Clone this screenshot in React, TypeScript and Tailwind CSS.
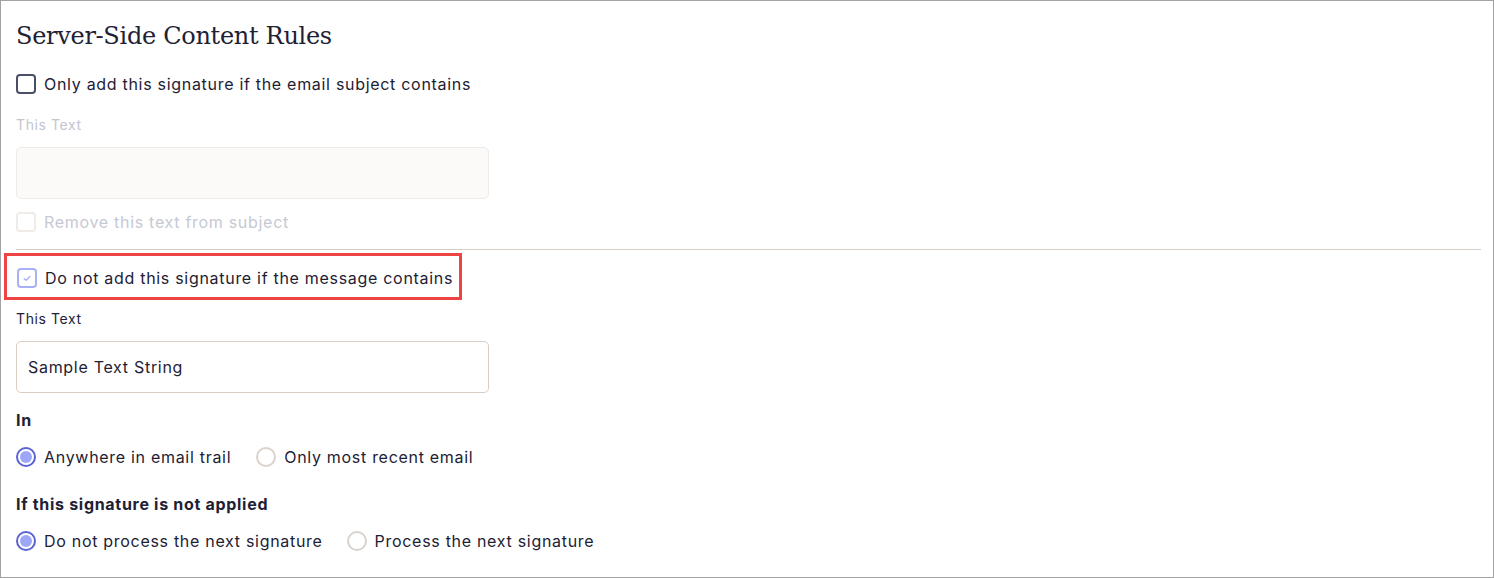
import React from 'react';

const sans = "font-['Inter','Noto_Sans',sans-serif]";
const body = 'text-[16px] leading-5 tracking-[0.7px]';

const Checkbox = ({ state }: { state: 'off' | 'disabled' | 'checked' }) => {
  if (state === 'checked') {
    return (
      <span className="flex h-5 w-5 shrink-0 items-center justify-center rounded-[4px] border-2 border-[#a9b0f7] bg-white">
        <svg viewBox="0 0 12 12" className="h-[10px] w-[10px]">
          <path d="M2.5 6.8 L5 8.8 L9.5 4" fill="none" stroke="#9aa2f3" strokeWidth="1.4" strokeLinecap="round" strokeLinejoin="round" />
        </svg>
      </span>
    );
  }
  return (
    <span
      className={
        'block h-5 w-5 shrink-0 rounded-[4px] border-2 bg-white ' +
        (state === 'off' ? 'border-[#4a4f67]' : 'border-[#f0ebe7]')
      }
    />
  );
};

const Radio = ({ checked }: { checked?: boolean }) =>
  checked ? (
    <span className="flex h-5 w-5 shrink-0 items-center justify-center rounded-full border-2 border-[#5a62d4] bg-white">
      <span className="h-3 w-3 rounded-full bg-[#9ea6f6]" />
    </span>
  ) : (
    <span className="block h-5 w-5 shrink-0 rounded-full border-2 border-[#dad2cc] bg-white" />
  );

export default function App() {
  return (
    <div className={`h-[578px] w-[1494px] border border-[#a3a3a3] bg-white pl-[15px] pr-[12px] text-[#1e2134] ${sans}`}>
      <h1 className="mt-[19px] font-['DejaVu_Serif',serif] text-[24px] leading-8 tracking-[-0.3px] text-[#1e2134]">
        Server-Side Content Rules
      </h1>

      <label className="mt-[22px] flex items-center gap-2">
        <Checkbox state="off" />
        <span className={body}>Only add this signature if the email subject contains</span>
      </label>

      <div className="mt-[21px] text-[14px] leading-5 tracking-[0.6px] text-[#c3c5cf]">This Text</div>
      <div className="mt-3 h-[52px] w-[473px] rounded-[5px] border border-[#efece8] bg-[#fbfaf8]" />

      <label className="mt-[13px] flex items-center gap-2">
        <Checkbox state="disabled" />
        <span className={`${body} text-[#c6c9d4]`}>Remove this text from subject</span>
      </label>

      <div className="mt-[17px] h-px bg-[#d6cfc8]" />

      <div className="-ml-[12px] mt-[3px] w-fit border-[3px] border-[#ef4444] pb-[9px] pl-[10px] pr-[6px] pt-3">
        <label className="flex items-center gap-2">
          <Checkbox state="checked" />
          <span className={body}>Do not add this signature if the message contains</span>
        </label>
      </div>

      <div className="mt-[9px] text-[14px] leading-5 tracking-[0.6px]">This Text</div>
      <div className={`mt-3 flex h-[52px] w-[473px] items-center rounded-[5px] border border-[#d9cec4] bg-white px-[11px] ${body}`}>
        Sample Text String
      </div>

      <div className="mt-[17px] text-[16px] font-bold leading-5 tracking-[0.7px]">In</div>
      <div className="mt-[17px] flex items-center">
        <label className="flex items-center gap-2">
          <Radio checked />
          <span className={body}>Anywhere in email trail</span>
        </label>
        <label className="ml-[25px] flex items-center gap-2">
          <Radio />
          <span className={body}>Only most recent email</span>
        </label>
      </div>

      <div className="mt-[27px] text-[16px] font-bold leading-5 tracking-[0.7px]">If this signature is not applied</div>
      <div className="mt-[17px] flex items-center">
        <label className="flex items-center gap-2">
          <Radio checked />
          <span className={body}>Do not process the next signature</span>
        </label>
        <label className="ml-[24px] flex items-center gap-2">
          <Radio />
          <span className={body}>Process the next signature</span>
        </label>
      </div>
    </div>
  );
}
